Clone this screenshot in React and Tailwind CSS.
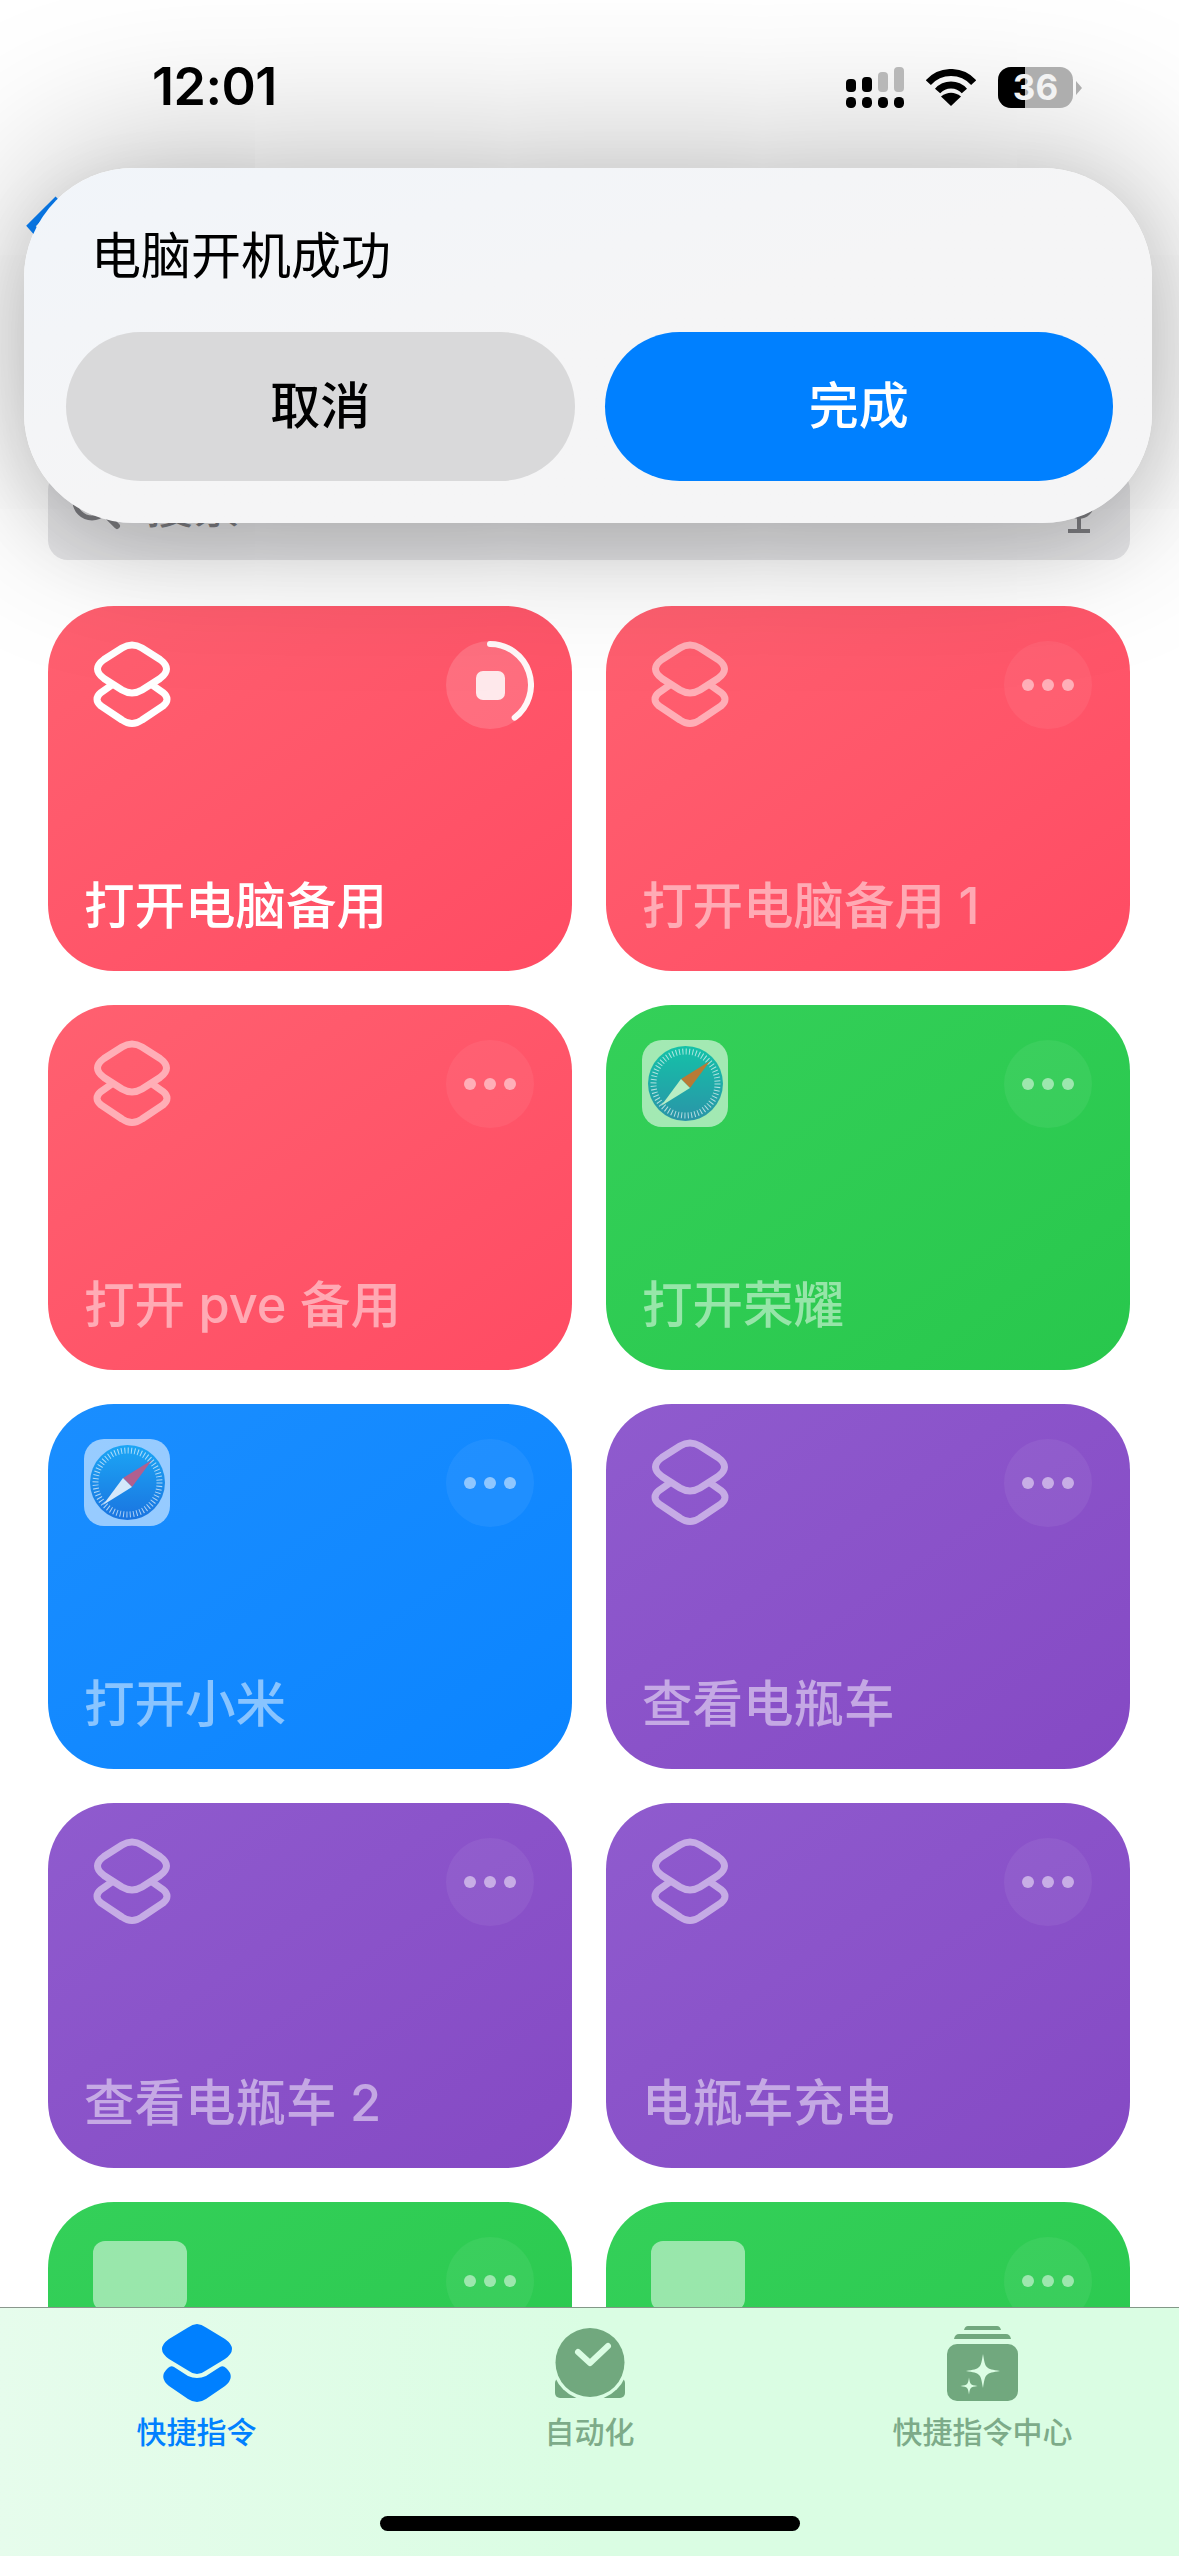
import { useId } from 'react'

const red = 'from-[#ff6070] to-[#ff4b63]'
const green = 'from-[#34d059] to-[#28c74c]'
const blue = 'from-[#1a8eff] to-[#0a84ff]'
const purple = 'from-[#8f5bce] to-[#8549c4]'

const cards = [
  { title: '打开电脑备用', color: red, icon: 'layers', running: true },
  { title: '打开电脑备用 1', color: red, icon: 'layers' },
  { title: '打开 pve 备用', color: red, icon: 'layers' },
  { title: '打开荣耀', color: green, icon: 'safari', tint: ['#14c2a8', '#2a94a8'], needle: '#b97a36', tail: '#b8eec4' },
  { title: '打开小米', color: blue, icon: 'safari', tint: ['#1ca6f5', '#1a74e0'], needle: '#b0608f', tail: '#d4e8fb' },
  { title: '查看电瓶车', color: purple, icon: 'layers' },
  { title: '查看电瓶车 2', color: purple, icon: 'layers' },
  { title: '电瓶车充电', color: purple, icon: 'layers' },
  { title: '', color: green, icon: 'tile' },
  { title: '', color: green, icon: 'tile' },
]

function LayersIcon({ dim }) {
  return (
    <svg width="78" height="87" viewBox="0 0 78 87" fill="none" className={dim ? 'opacity-50' : ''}>
      <path d="M29 7Q39 1 49 7L67 18.5Q80 28 67 37.5L49 49Q39 55 29 49L11 37.5Q-2 28 11 18.5Z" stroke="white" strokeWidth="7" />
      <path d="M20 43.2L8 51.5Q0 58 8 65L29 79Q39 86 49 79L70 65Q78 58 70 51.5L58 43.2" stroke="white" strokeWidth="7" />
    </svg>
  )
}

function SafariIcon({ tint, needle, tail }) {
  const id = useId()
  return (
    <div className="w-[86px] h-[87px] rounded-[20px] bg-white/55 flex items-center justify-center">
      <svg width="75" height="75" viewBox="0 0 75 75">
        <defs>
          <linearGradient id={id} x1="0" y1="0" x2="0" y2="1">
            <stop offset="0" stopColor={tint[0]} />
            <stop offset="1" stopColor={tint[1]} />
          </linearGradient>
        </defs>
        <circle cx="37.5" cy="37.5" r="37.5" fill={`url(#${id})`} />
        <circle cx="37.5" cy="37.5" r="32" fill="none" stroke="white" strokeOpacity="0.65" strokeWidth="6" strokeDasharray="1 2.35" />
        <path d="M62 15L42 42L33 33Z" fill={needle} />
        <path d="M13 60L33 33L42 42Z" fill={tail} />
      </svg>
    </div>
  )
}

function CardAction({ running }) {
  if (running) {
    return (
      <div className="relative w-[88px] h-[88px] rounded-full bg-white/15 flex items-center justify-center">
        <div className="w-[29px] h-[29px] rounded-[7px] bg-white/85" />
        <svg className="absolute inset-0" width="88" height="88" viewBox="0 0 88 88" fill="none">
          <path d="M44 3A41 41 0 0 1 68.7 76.7" stroke="white" strokeOpacity="0.95" strokeWidth="6" strokeLinecap="round" />
        </svg>
      </div>
    )
  }
  return (
    <div className="w-[88px] h-[88px] rounded-full bg-white/[0.06] flex items-center justify-center gap-[8px]">
      <span className="w-[12px] h-[12px] rounded-full bg-white/50" />
      <span className="w-[12px] h-[12px] rounded-full bg-white/50" />
      <span className="w-[12px] h-[12px] rounded-full bg-white/50" />
    </div>
  )
}

function Card({ card }) {
  return (
    <div className={`h-[365px] rounded-[66px] bg-linear-to-br ${card.color} pl-[36px] pr-[38px] pt-[35px] pb-[40px] flex flex-col justify-between`}>
      <div className="flex items-start justify-between">
        {card.icon === 'layers' && <div className="pl-[9px]"><LayersIcon dim={!card.running} /></div>}
        {card.icon === 'safari' && <SafariIcon tint={card.tint} needle={card.needle} tail={card.tail} />}
        {card.icon === 'tile' && <div className="ml-[9px] mt-[4px] w-[94px] h-[70px] rounded-[12px] bg-white/50" />}
        <CardAction running={card.running} />
      </div>
      <div className={`text-[50.5px] leading-[50px] font-medium ${card.running ? 'text-white' : 'text-white/50'}`}>{card.title}</div>
    </div>
  )
}

function StatusBar() {
  return (
    <div className="relative z-20 h-[168px] pl-[152px] pr-[97px] pt-[58px] flex items-start justify-between">
      <div className="text-[52px] leading-[58px] font-semibold tracking-[-0.5px] text-black">12:01</div>
      <div className="flex items-start gap-[22px] pt-[9px]">
        <svg width="58" height="41" viewBox="0 0 58 41">
          <rect x="0" y="12" width="10" height="13" rx="4" fill="black" />
          <rect x="16" y="10" width="10" height="15" rx="4" fill="black" />
          <rect x="32" y="5" width="10" height="20" rx="4" fill="#b8b8b8" />
          <rect x="48" y="0" width="10" height="25" rx="4" fill="#b8b8b8" />
          <rect x="0" y="30" width="10" height="11" rx="4.5" fill="black" />
          <rect x="16" y="30" width="10" height="11" rx="4.5" fill="black" />
          <rect x="32" y="30" width="10" height="11" rx="4.5" fill="black" />
          <rect x="48" y="30" width="10" height="11" rx="4.5" fill="black" />
        </svg>
        <svg width="50" height="37" viewBox="0 0 50 37" fill="none" className="mt-[2px]">
          <path d="M2.3 13.6A30.5 30.5 0 0 1 47.7 13.6" stroke="black" strokeWidth="7" />
          <path d="M11.6 22A18 18 0 0 1 38.4 22" stroke="black" strokeWidth="7" />
          <path d="M25 37L15 27.5Q25 20 35 27.5Z" fill="black" />
        </svg>
        <div className="flex items-center gap-[3px]">
          <div className="relative w-[75px] h-[41px] rounded-[13px] bg-[#aeaeae] overflow-hidden flex items-center justify-center">
            <div className="absolute left-0 top-0 bottom-0 w-[27px] bg-black" />
            <span className="relative text-[35px] leading-[41px] font-bold text-[#f2f2f2]">36</span>
          </div>
          <svg width="6" height="14" viewBox="0 0 6 14"><path d="M0 0L6 7L0 14Z" fill="#aeaeae" /></svg>
        </div>
      </div>
    </div>
  )
}

function SearchBar() {
  return (
    <div className="ml-[48px] mr-[49px] mt-[302px] h-[90px] rounded-[20px] bg-[#e6e6e8] pl-[23px] pr-[36px] pt-[12px] flex items-start justify-between text-[#7e7e82]">
      <div className="flex items-start gap-[25px]">
        <svg width="50" height="50" viewBox="0 0 50 50" fill="none" className="-mt-[2px]">
          <circle cx="21" cy="21" r="17" stroke="#7e7e82" strokeWidth="5" />
          <path d="M33 33L46 46" stroke="#7e7e82" strokeWidth="6" strokeLinecap="round" />
        </svg>
        <span className="text-[47px] leading-[48px]">搜索</span>
      </div>
      <svg width="30" height="56" viewBox="0 0 30 56" fill="none" className="-mt-[4px]">
        <path d="M2 26A13 13 0 0 0 28 26M15 39V52M4 53H26" stroke="#7e7e82" strokeWidth="4" />
      </svg>
    </div>
  )
}

function Dialog() {
  return (
    <div className="absolute z-10 left-[24px] top-[168px] w-[1128px] h-[355px] rounded-[110px] bg-linear-to-br from-[#f1f5fa] via-[#f5f5f6] to-[#f5f5f6] shadow-[0_-10px_170px_rgba(0,0,0,0.28),0_25px_70px_rgba(0,0,0,0.12)] pl-[42px] pr-[39px] pt-[58px]">
      <div className="pl-[25px] text-[50px] leading-[60px] text-black">电脑开机成功</div>
      <div className="mt-[46px] flex gap-[30px]">
        <div className="flex-1 h-[149px] rounded-full bg-[#d9d9da] flex items-center justify-center text-[50px] font-medium text-black">取消</div>
        <div className="flex-1 h-[149px] rounded-full bg-[#0080ff] flex items-center justify-center text-[50px] font-medium text-white">完成</div>
      </div>
    </div>
  )
}

function Sparkle({ cx, cy, r, k }) {
  const a = r * k
  return (
    <path
      fill="#dcfde4"
      d={`M${cx} ${cy - r}C${cx + a} ${cy - a} ${cx + a} ${cy - a} ${cx + r} ${cy}C${cx + a} ${cy + a} ${cx + a} ${cy + a} ${cx} ${cy + r}C${cx - a} ${cy + a} ${cx - a} ${cy + a} ${cx - r} ${cy}C${cx - a} ${cy - a} ${cx - a} ${cy - a} ${cx} ${cy - r}Z`}
    />
  )
}

function TabBar() {
  const muted = '#71a87e'
  return (
    <div className="absolute z-10 left-0 right-0 bottom-0 h-[249px] border-t border-black/40 bg-linear-to-r from-[#e6fcec] via-[#dafde3] to-[#dafde3] pt-[15px]">
      <div className="grid grid-cols-3">
        <div className="flex flex-col items-center">
          <div className="h-[80px] flex items-center justify-center">
            <svg width="70" height="79" viewBox="0 0 70 79" className="overflow-visible">
              <path d="M6 44Q9 41 12 43L26 52Q35 56 44 52L58 43Q61 41 64 44Q74 53 63 62L44 75Q35 81 26 75L7 62Q-4 53 6 44Z" fill="#0080ff" />
              <path d="M26 3.5Q35 -3.5 44 3.5L63 15Q77 25 63 35L44 46.5Q35 53.5 26 46.5L7 35Q-7 25 7 15Z" fill="#0080ff" />
            </svg>
          </div>
          <div className="mt-[14px] text-[30px] leading-[30px] font-medium text-[#0080ff]">快捷指令</div>
        </div>
        <div className="flex flex-col items-center">
          <div className="h-[80px] flex items-center justify-center">
            <svg width="70" height="70" viewBox="0 0 70 70" fill="none">
              <rect x="0" y="50" width="70" height="20" rx="5" fill={muted} />
              <circle cx="35" cy="34.5" r="38" fill="#dafde3" />
              <circle cx="35" cy="34.5" r="34.5" fill={muted} />
              <path d="M23 24L35 35L53 18" stroke="#dafde3" strokeWidth="6" strokeLinecap="round" strokeLinejoin="round" />
            </svg>
          </div>
          <div className="mt-[14px] text-[30px] leading-[30px] font-medium text-[#7dab89]">自动化</div>
        </div>
        <div className="flex flex-col items-center">
          <div className="h-[80px] flex items-center justify-center">
            <svg width="71" height="76" viewBox="0 0 71 76">
              <path d="M17 5Q18 1 21 1H50Q53 1 54 5Z" fill={muted} />
              <path d="M7 14Q8 9 12 9H59Q63 9 64 14Z" fill={muted} />
              <rect x="0" y="19" width="71" height="57" rx="10" fill={muted} />
              <Sparkle cx={36} cy={46} r={17} k={0.14} />
              <Sparkle cx={22} cy={61} r={8.5} k={0.14} />
            </svg>
          </div>
          <div className="mt-[14px] text-[30px] leading-[30px] font-medium text-[#7dab89]">快捷指令中心</div>
        </div>
      </div>
      <div className="mt-[69px] mx-auto w-[420px] h-[15px] rounded-full bg-black" />
    </div>
  )
}

export default function App() {
  return (
    <div className="relative w-[1179px] h-[2556px] overflow-hidden bg-white font-['Inter','Noto_Sans_CJK_SC',sans-serif]">
      <StatusBar />

      {/* sits behind the dialog, only a bit of it shows */}
      <svg className="absolute left-[24px] top-[190px]" width="40" height="70" viewBox="0 0 40 70" fill="none">
        <path d="M34 9L7 36L30 62" stroke="#0a84ff" strokeWidth="7" />
      </svg>

      <SearchBar />

      <div className="mt-[46px] pl-[48px] pr-[49px] grid grid-cols-2 gap-x-[34px] gap-y-[34px]">
        {cards.map((card, i) => (
          <Card key={i} card={card} />
        ))}
      </div>

      <Dialog />
      <TabBar />
    </div>
  )
}
